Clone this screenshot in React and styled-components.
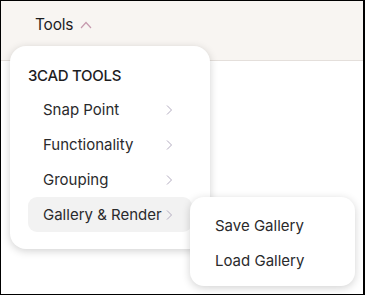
import React from 'react';
import styled, { createGlobalStyle } from 'styled-components';

const GlobalStyle = createGlobalStyle`
  body {
    margin: 0;
    font-family: Inter, "Noto Sans", sans-serif;
    background: #fff;
  }
`;

const Frame = styled.div`
  position: relative;
  width: 365px;
  height: 295px;
  box-sizing: border-box;
  border: 1px solid #000;
  border-right-width: 2px;
  background: #fff;
  overflow: hidden;
`;

const TopBar = styled.div`
  height: 60px;
  background: #f8f5f2;
  border-bottom: 1px solid #e4dfdb;
  display: flex;
  align-items: flex-start;
  padding: 14px 0 0 34px;
  box-sizing: border-box;
`;

const ToolsButton = styled.button`
  display: flex;
  align-items: center;
  gap: 7px;
  border: none;
  background: none;
  padding: 0;
  font-family: inherit;
  font-size: 15.5px;
  letter-spacing: -0.2px;
  color: #1d1d1f;
  cursor: pointer;
`;

const Menu = styled.div`
  position: absolute;
  left: 9px;
  top: 45px;
  width: 200px;
  box-sizing: border-box;
  padding: 13px 18px 17px 18px;
  background: #fff;
  border-radius: 16px;
  box-shadow: 0 2px 8px rgba(0, 0, 0, 0.18);
`;

const Heading = styled.div`
  font-size: 15px;
  font-weight: 500;
  letter-spacing: -0.3px;
  color: #1d1d1f;
  height: 33px;
  display: flex;
  align-items: center;
`;

const Item = styled.div`
  position: relative;
  display: flex;
  align-items: center;
  justify-content: space-between;
  height: 35px;
  padding: 0 19px 0 15px;
  border-radius: 9px;
  font-size: 15px;
  color: #2a2a2c;
  background: ${({ active }) => (active ? '#f2f2f2' : 'transparent')};
`;

const SubMenu = styled.div`
  position: absolute;
  left: 162px;
  top: 0;
  width: 165px;
  box-sizing: border-box;
  padding: 11px 0 8px 25px;
  background: #fff;
  border-radius: 14px;
  box-shadow: 0 2px 8px rgba(0, 0, 0, 0.18);
`;

const SubItem = styled.div`
  height: 35px;
  display: flex;
  align-items: center;
  font-size: 15px;
  color: #2a2a2c;
`;

const Chevron = () => (
  <svg width="8" height="12" viewBox="0 0 8 12" fill="none">
    <path d="M2 1.5 L6.5 6 L2 10.5" stroke="#b3acc0" strokeWidth="1" />
  </svg>
);

const UpChevron = () => (
  <svg width="12" height="8" viewBox="0 0 12 8" fill="none">
    <path d="M1 7 L6 1.5 L11 7" stroke="#c69aae" strokeWidth="1.2" />
  </svg>
);

const items = ['Snap Point', 'Functionality', 'Grouping', 'Gallery & Render'];

export default function App() {
  return (
    <Frame>
      <GlobalStyle />
      <TopBar>
        <ToolsButton>
          Tools <UpChevron />
        </ToolsButton>
      </TopBar>
      <Menu>
        <Heading>3CAD TOOLS</Heading>
        {items.map((label, i) => {
          const active = i === items.length - 1;
          return (
            <Item key={label} active={active}>
              <span>{label}</span>
              <Chevron />
              {active && (
                <SubMenu>
                  <SubItem>Save Gallery</SubItem>
                  <SubItem>Load Gallery</SubItem>
                </SubMenu>
              )}
            </Item>
          );
        })}
      </Menu>
    </Frame>
  );
}
